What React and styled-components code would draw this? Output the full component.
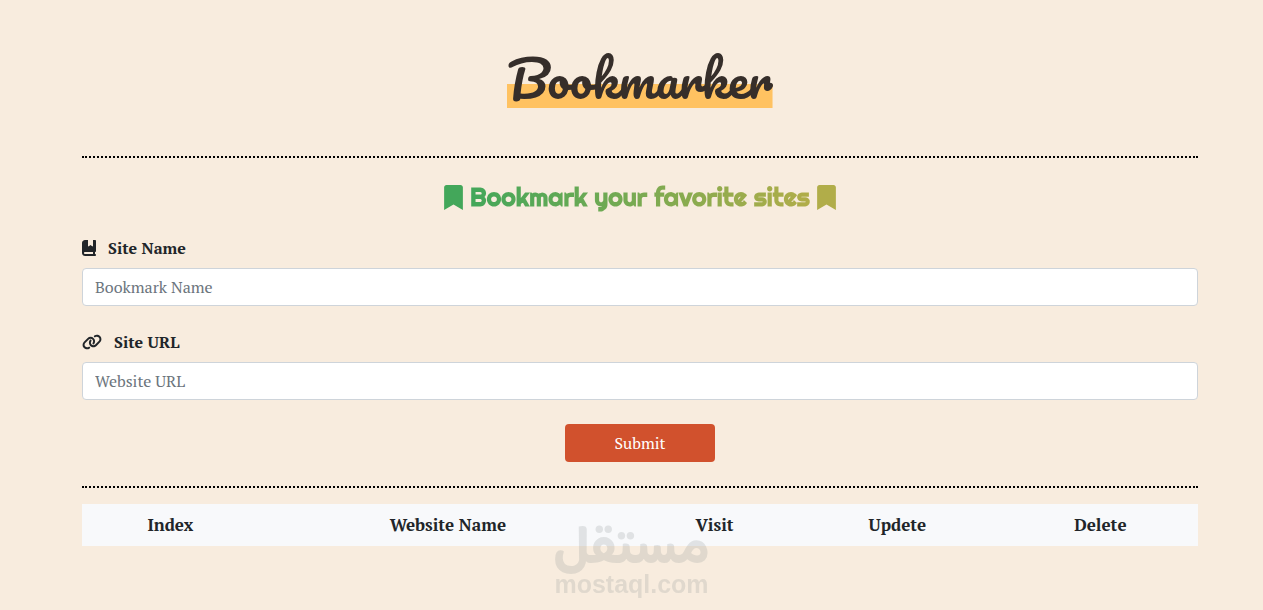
import styled, { createGlobalStyle } from 'styled-components';
import { FaBookmark } from 'react-icons/fa';
import { FaBookBookmark, FaLink } from 'react-icons/fa6';

const columns = ['Index', 'Website Name', 'Visit', 'Updete', 'Delete'];

const App = () => {
  return (
    <>
      <GlobalStyle />
      <Page>
        <Container>
          <Header>
            <Title>Bookmarker</Title>
          </Header>
          <Divider />
          <Form onSubmit={(e) => e.preventDefault()}>
            <Subtitle>
              <FaBookmark color='#43a75a' />
              <GradientText>Bookmark your favorite sites</GradientText>
              <FaBookmark color='#b1ad49' />
            </Subtitle>
            <Field>
              <Label htmlFor='siteName' $iconWidth='14px'>
                <FaBookBookmark />
                Site Name
              </Label>
              <Input id='siteName' type='text' placeholder='Bookmark Name' />
            </Field>
            <Field>
              <Label htmlFor='siteUrl' $iconWidth='20px'>
                <FaLink />
                Site URL
              </Label>
              <Input id='siteUrl' type='text' placeholder='Website URL' />
            </Field>
            <SubmitButton type='submit'>Submit</SubmitButton>
          </Form>
          <Divider />
          <Table>
            <thead>
              <tr>
                {columns.map((column) => (
                  <HeadCell key={column}>{column}</HeadCell>
                ))}
              </tr>
            </thead>
          </Table>
        </Container>
        <Watermark>
          <WatermarkLogo lang='ar' dir='rtl'>مستقل</WatermarkLogo>
          <WatermarkDomain>mostaql.com</WatermarkDomain>
        </Watermark>
      </Page>
    </>
  );
};

const GlobalStyle = createGlobalStyle`
  *, *::before, *::after {
    box-sizing: border-box;
  }

  body {
    margin: 0;
    background-color: #f8ecde;
    color: #212529;
    font-family: 'PT Serif', 'DejaVu Serif Condensed', 'DejaVu Serif', serif;
    font-size: 16px;
    line-height: 24px;
  }
`;

const Page = styled.div`
  position: relative;
  min-height: 100vh;
  padding-left: 17px;
`;

const Container = styled.main`
  max-width: 1140px;
  margin: 0 auto;
  padding: 0 12px;
`;

const Header = styled.header`
  display: flex;
  justify-content: center;
  padding: 48px 0;
`;

const Title = styled.h1`
  margin: 0;
  background: linear-gradient(#ffc261, #ffc261) bottom / 100% 24px no-repeat;
  color: #362e2a;
  font-family: Pacifico, Lato, sans-serif;
  font-size: 50px;
  font-weight: 500;
  line-height: 60px;
`;

const Divider = styled.hr`
  margin: 0;
  border: 0;
  border-top: 2px dotted #000;
`;

const Form = styled.form`
  display: flex;
  flex-direction: column;
  gap: 24px;
  padding: 24px 0;
`;

const Subtitle = styled.h2`
  display: flex;
  justify-content: center;
  align-items: center;
  gap: 7px;
  margin: 0;
  font-family: Righteous, Lato, sans-serif;
  font-size: 25px;
  font-weight: 700;
  line-height: 30px;

  svg {
    width: 19px;
  }
`;

const GradientText = styled.span`
  background: linear-gradient(to right, #43a75a, #b1ad49);
  background-clip: text;
  color: transparent;
`;

const Field = styled.div`
  display: flex;
  flex-direction: column;
  gap: 8px;
`;

const Label = styled.label`
  display: flex;
  align-items: center;
  gap: 12px;
  font-weight: 700;

  svg {
    width: ${(props) => props.$iconWidth};
  }
`;

const Input = styled.input`
  width: 100%;
  padding: 6px 12px;
  border: 1px solid #ced4da;
  border-radius: 4px;
  background-color: #fff;
  color: #212529;
  font: inherit;

  &::placeholder {
    color: #6c757d;
    opacity: 1;
  }
`;

const SubmitButton = styled.button`
  align-self: center;
  width: 150px;
  padding: 7px 12px;
  border: 0;
  border-radius: 4px;
  background-color: #d1512d;
  color: #fff;
  font: inherit;
  cursor: pointer;
`;

const Table = styled.table`
  width: 100%;
  margin-top: 16px;
  border-collapse: collapse;
  background-color: #f8f9fb;
`;

const HeadCell = styled.th`
  padding: 9px 8px;
  font-size: 17px;
  font-weight: 700;
  text-align: center;
`;

const Watermark = styled.div`
  position: absolute;
  top: 530px;
  left: 50%;
  display: flex;
  flex-direction: column;
  align-items: center;
  transform: translateX(-50%);
  color: #828c8c;
  font-weight: 700;
  opacity: 0.2;
  pointer-events: none;
`;

const WatermarkLogo = styled.span`
  font-family: 'Baloo Bhaijaan 2', Cairo, 'DejaVu Sans', sans-serif;
  font-size: 54px;
  line-height: 42px;
`;

const WatermarkDomain = styled.span`
  font-family: 'Liberation Sans', Arial, sans-serif;
  font-size: 25px;
  line-height: 24px;
`;

export default App;
